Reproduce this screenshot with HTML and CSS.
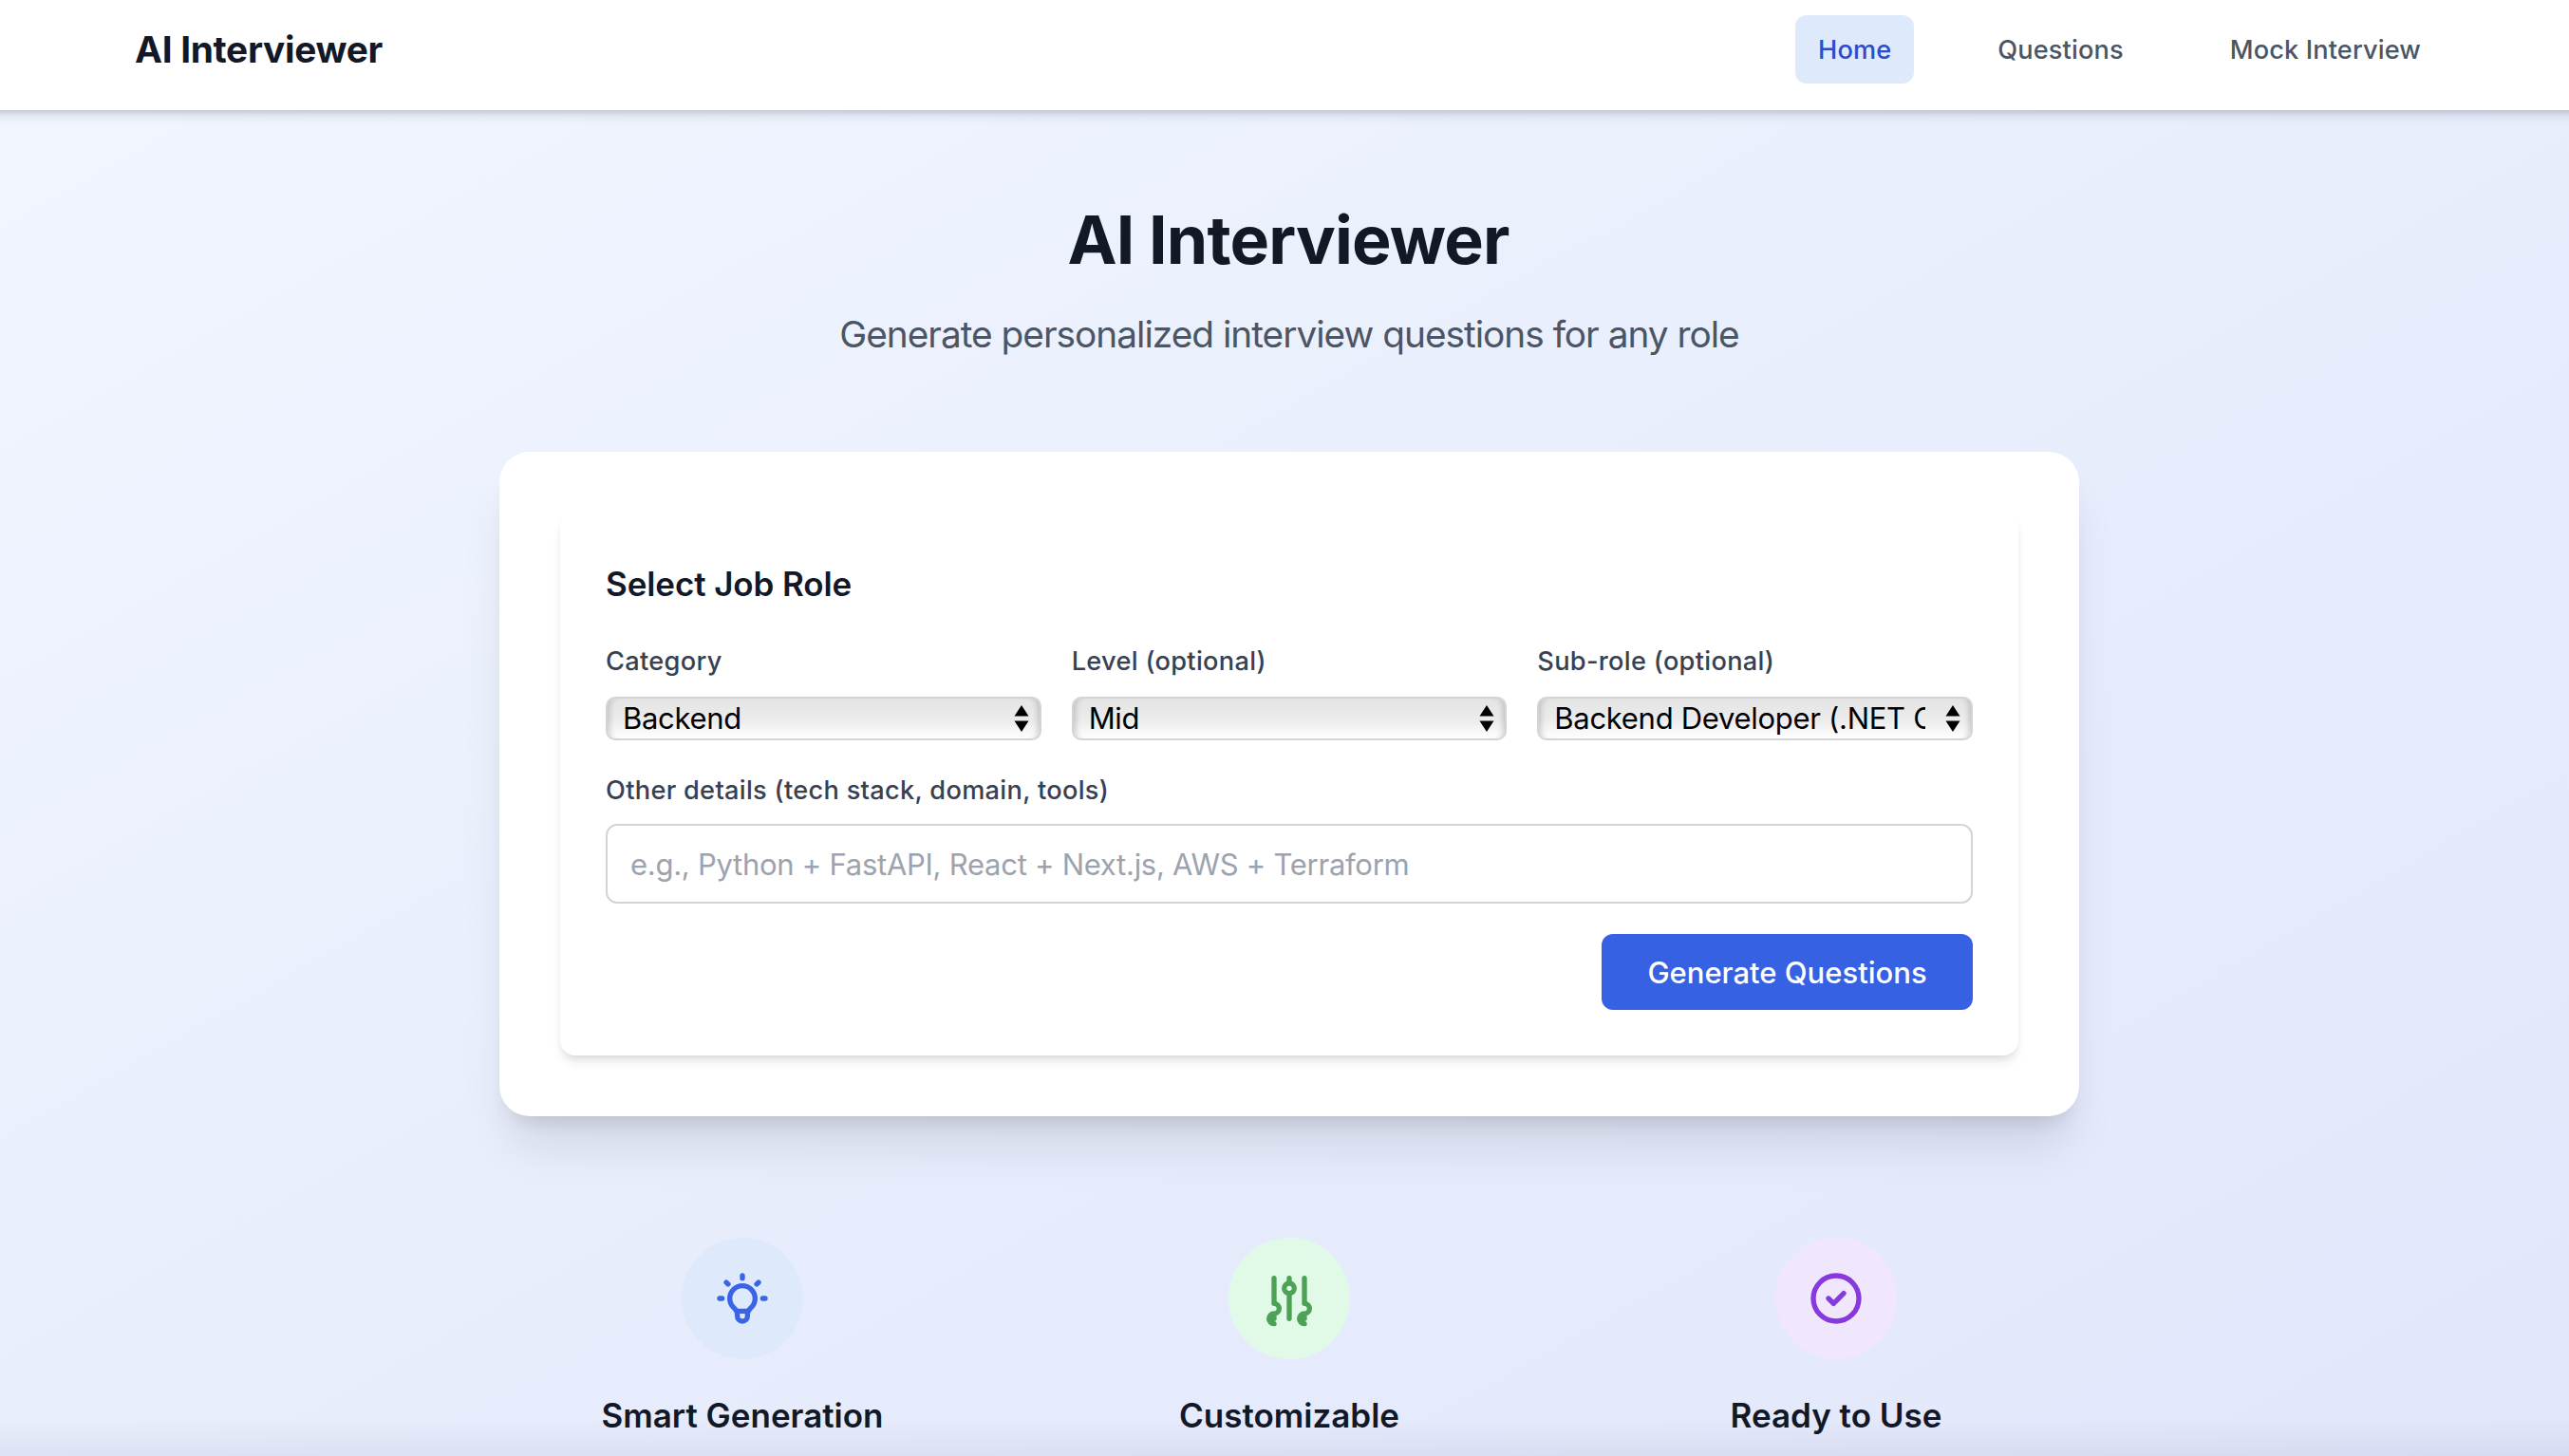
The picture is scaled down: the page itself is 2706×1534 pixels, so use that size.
FILE: index.html
```html
<!DOCTYPE html>
<html lang="en">
<head>
<meta charset="utf-8">
<title>AI Interviewer</title>
<link rel="stylesheet" href="styles.css">
</head>
<body>
<div class="page">
  <header class="header">
    <a class="brand">AI Interviewer</a>
    <nav class="nav">
      <a class="nav-link nav-link-active">Home</a>
      <a class="nav-link">Questions</a>
      <a class="nav-link">Mock Interview</a>
    </nav>
  </header>
  <main class="main">
    <h1 class="title">AI Interviewer</h1>
    <p class="subtitle">Generate personalized interview questions for any role</p>
    <section class="card">
      <form class="panel">
        <h2 class="panel-title">Select Job Role</h2>
        <div class="fields">
          <div class="field">
            <label class="label">Category</label>
            <div class="select"><span class="select-value">Backend</span><svg class="select-arrows" viewBox="0 0 16 28"><path d="M8 0l7.5 11.5H.5zM8 28L.5 16.500h15z"/></svg></div>
          </div>
          <div class="field">
            <label class="label">Level (optional)</label>
            <div class="select"><span class="select-value">Mid</span><svg class="select-arrows" viewBox="0 0 16 28"><path d="M8 0l7.5 11.5H.5zM8 28L.5 16.500h15z"/></svg></div>
          </div>
          <div class="field">
            <label class="label">Sub-role (optional)</label>
            <div class="select"><span class="select-value">Backend Developer (.NET Core)</span><svg class="select-arrows" viewBox="0 0 16 28"><path d="M8 0l7.5 11.5H.5zM8 28L.5 16.500h15z"/></svg></div>
          </div>
        </div>
        <label class="label label-details">Other details (tech stack, domain, tools)</label>
        <input class="input" type="text" placeholder="e.g., Python + FastAPI, React + Next.js, AWS + Terraform">
        <div class="actions"><button class="button" type="button">Generate Questions</button></div>
      </form>
    </section>
    <section class="features">
      <div class="feature">
        <div class="badge badge-blue"><svg class="icon" viewBox="0 0 24 24"><path d="M9.663 17h4.673M12 3v1m6.364 1.636l-.707.707M21 12h-1M4 12H3m3.343-5.657l-.707-.707m2.828 9.900a5 5 0 117.072 0l-.548.547A3.374 3.374 0 0014 18.469V19a2 2 0 11-4 0v-.531c0-.895-.356-1.754-.988-2.386l-.548-.547z"/></svg></div>
        <h3 class="feature-title">Smart Generation</h3>
      </div>
      <div class="feature">
        <div class="badge badge-green"><svg class="icon" viewBox="0 0 24 24"><path d="M12 6V4m0 2a2 2 0 100 4m0-4a2 2 0 110 4m-6 8a2 2 0 100-4m0 4a2 2 0 100 4m0-4v2m0-6V4m6 6v10m6-2a2 2 0 100-4m0 4a2 2 0 100 4m0-4v2m0-6V4"/></svg></div>
        <h3 class="feature-title">Customizable</h3>
      </div>
      <div class="feature">
        <div class="badge badge-purple"><svg class="icon" viewBox="0 0 24 24"><path d="M9 12l2 2 4-4m6 2a9 9 0 11-18 0 9 9 0 0118 0z"/></svg></div>
        <h3 class="feature-title">Ready to Use</h3>
      </div>
    </section>
  </main>
  <div class="edge-shade"></div>
</div>
</body>
</html>
```
FILE: styles.css
```css
* { box-sizing: border-box; }
body {
  margin: 0;
  overflow: hidden;
  font-family: Inter, "Liberation Sans", sans-serif;
  color: #131827;
}
h1, h2, h3, p { margin: 0; }
.page {
  position: relative;
  width: 2716px;
  height: 1534px;
  overflow: hidden;
  background: linear-gradient(to bottom right, #f1f6ff, #e1e6fb);
}
.header {
  height: 116px;
  margin: 0 -20px;
  padding: 0 162px 12px;
  display: flex;
  align-items: center;
  justify-content: space-between;
  background: #fff;
  box-shadow: 0 8px 12px -2px rgba(0, 0, 0, .1), 0 4px 8px -4px rgba(0, 0, 0, .2);
}
.brand { font-size: 38.8px; line-height: 56px; font-weight: 700; letter-spacing: -.3px; }
.nav { display: flex; gap: 64px; }
.nav-link {
  height: 72px;
  padding: 1px 24px 0;
  border-radius: 12px;
  font-size: 27.2px;
  line-height: 71px;
  font-weight: 500;
  letter-spacing: .12px;
  color: #4b5563;
  white-space: nowrap;
}
.nav-link-active { background: #dee9fc; color: #2c4bcf; }
.main {
  width: 1664px;
  margin: 0 auto;
  padding-top: 97px;
  display: flex;
  flex-direction: column;
}
.title { font-size: 69.8px; line-height: 80px; font-weight: 700; letter-spacing: -.85px; text-align: center; padding-right: 2px; }
.subtitle { margin-top: 31px; font-size: 38.8px; line-height: 56px; letter-spacing: -1px; text-align: center; color: #4b5563; }
.card {
  margin-top: 96px;
  height: 700px;
  padding: 64px;
  border-radius: 32px;
  background: #fff;
  box-shadow: 0 40px 50px -10px rgba(0, 0, 0, .1), 0 16px 20px -12px rgba(0, 0, 0, .12);
}
.panel {
  height: 572px;
  padding: 47px 48px 48px;
  border-radius: 16px;
  box-shadow: 0 8px 12px -2px rgba(0, 0, 0, .1), 0 4px 8px -4px rgba(0, 0, 0, .1);
}
.panel-title { font-size: 35px; line-height: 56px; font-weight: 600; letter-spacing: -.1px; }
.fields { margin-top: 34px; display: grid; grid-template-columns: repeat(3, minmax(0, 1fr)); gap: 32px; }
.label { display: block; font-size: 27.2px; line-height: 40px; font-weight: 500; letter-spacing: .3px; color: #374151; white-space: nowrap; }
.select {
  margin-top: 17px;
  height: 46px;
  padding: 0 11px 0 16px;
  display: flex;
  align-items: center;
  justify-content: space-between;
  border: 2px solid #d1d5db;
  border-radius: 10px;
  background: linear-gradient(#e4e4e4, #ececec 55%, #fff);
  box-shadow: inset 7px 0 6px -5px rgba(0, 0, 0, .18), inset -7px 0 6px -5px rgba(0, 0, 0, .18);
  color: #000;
}
.select-value { width: 391px; overflow: hidden; white-space: nowrap; font-size: 31px; line-height: 42px; letter-spacing: -.3px; }
.select-arrows { width: 16px; height: 28px; flex: none; fill: #000; }
.label-details { margin-top: 33px; }
.input {
  display: block;
  width: 100%;
  height: 84px;
  margin-top: 15px;
  padding: 1px 24px 0;
  border: 2px solid #d1d5db;
  border-radius: 12px;
  background: #fff;
  font: 400 31px/48px Inter, "Liberation Sans", sans-serif;
  letter-spacing: -.27px;
}
.input::placeholder { color: #9ca3af; opacity: 1; }
.actions { margin-top: 32px; display: flex; justify-content: flex-end; }
.button {
  width: 391px;
  height: 80px;
  padding: 2px 0 0;
  border: 0;
  border-radius: 12px;
  background: #3761e3;
  color: #fff;
  font: 500 31px/48px Inter, "Liberation Sans", sans-serif;
}
.features { margin-top: 128px; display: grid; grid-template-columns: repeat(3, 1fr); gap: 64px; }
.feature { display: flex; flex-direction: column; align-items: center; }
.badge { width: 128px; height: 128px; border-radius: 50%; display: flex; align-items: center; justify-content: center; }
.badge-blue { background: #dee9fb; color: #3964e5; }
.badge-green { background: #e1fae8; color: #4da256; }
.badge-purple { background: #f1e7fc; color: #8838df; }
.icon { width: 64px; height: 64px; fill: none; stroke: currentColor; stroke-width: 2; stroke-linecap: round; stroke-linejoin: round; }
.feature-title { margin-top: 31px; font-size: 35px; line-height: 56px; font-weight: 600; }
/* Soft shade lying over the bottom edge of the viewport */
.edge-shade {
  position: absolute;
  left: 0;
  right: 0;
  bottom: 0;
  height: 40px;
  background: linear-gradient(rgba(40, 40, 80, 0), rgba(40, 40, 80, .06));
}
```
